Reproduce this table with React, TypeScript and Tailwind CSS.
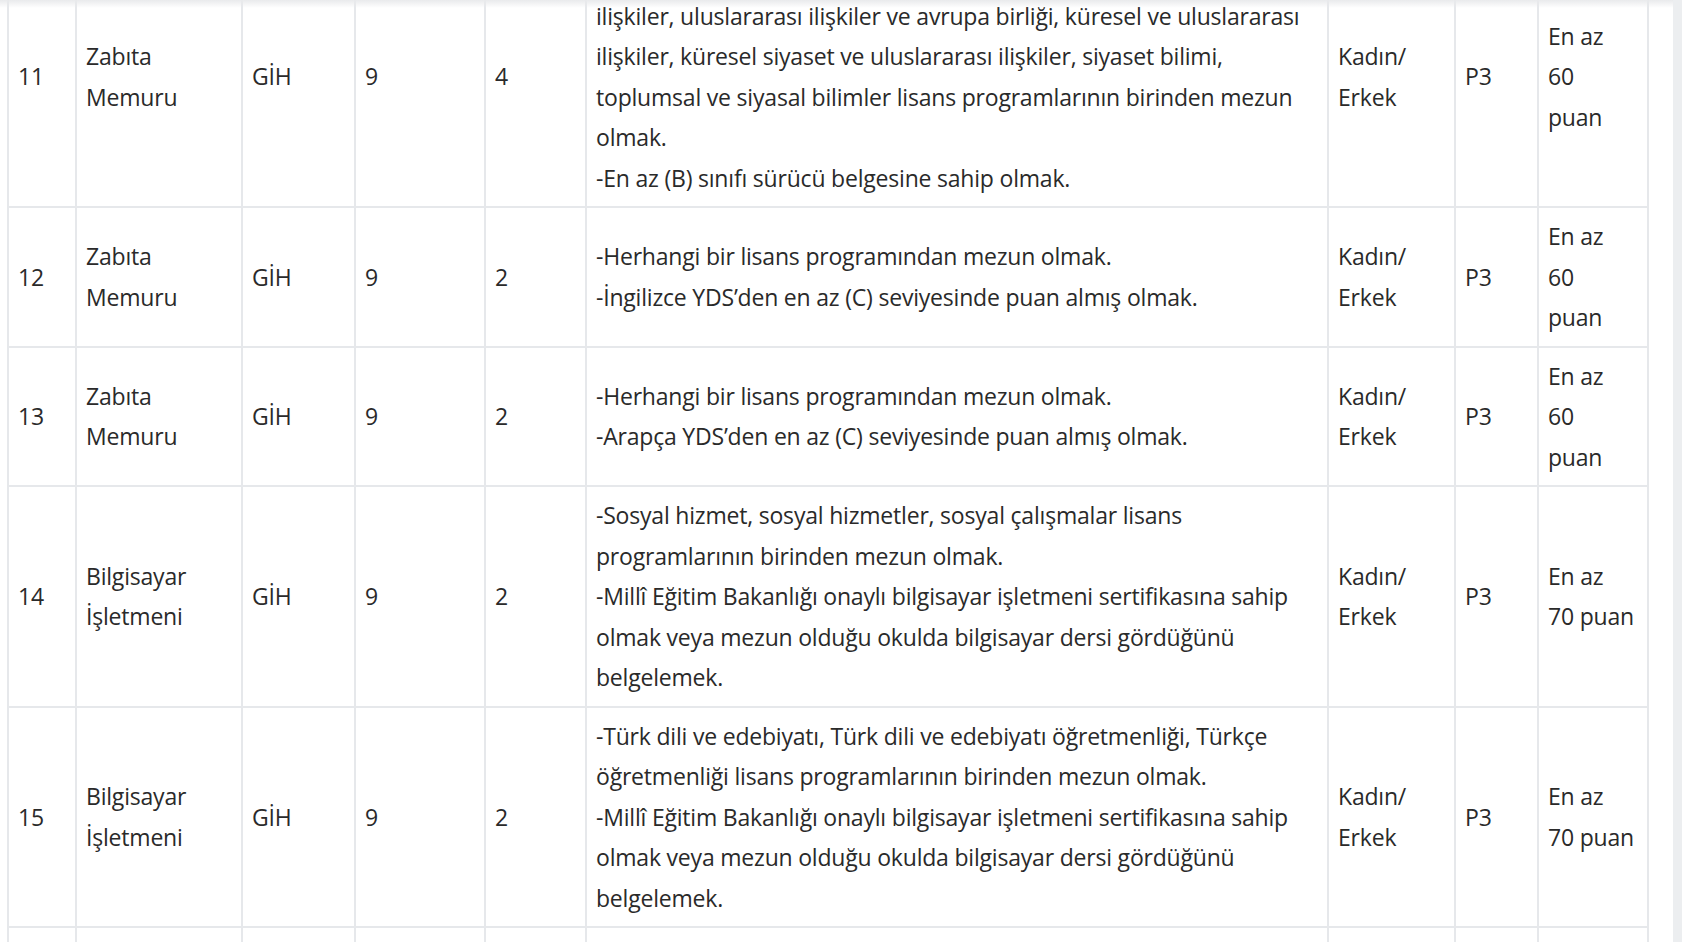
import React from 'react'

type Row = {
  no: string
  kadro: string[]
  sinif: string
  derece: string
  adet: string
  nitelik: string[]
  puan: string[]
}

const rows: Row[] = [
  {
    no: '11',
    kadro: ['Zabıta', 'Memuru'],
    sinif: 'GİH',
    derece: '9',
    adet: '4',
    nitelik: [
      '-Siyaset bilimi ve uluslararası ilişkiler, uluslararası',
      'ilişkiler, uluslararası ilişkiler ve avrupa birliği, küresel ve uluslararası',
      'ilişkiler, küresel siyaset ve uluslararası ilişkiler, siyaset bilimi,',
      'toplumsal ve siyasal bilimler lisans programlarının birinden mezun',
      'olmak.',
      '-En az (B) sınıfı sürücü belgesine sahip olmak.',
    ],
    puan: ['En az', '60', 'puan'],
  },
  {
    no: '12',
    kadro: ['Zabıta', 'Memuru'],
    sinif: 'GİH',
    derece: '9',
    adet: '2',
    nitelik: [
      '-Herhangi bir lisans programından mezun olmak.',
      '-İngilizce YDS’den en az (C) seviyesinde puan almış olmak.',
    ],
    puan: ['En az', '60', 'puan'],
  },
  {
    no: '13',
    kadro: ['Zabıta', 'Memuru'],
    sinif: 'GİH',
    derece: '9',
    adet: '2',
    nitelik: [
      '-Herhangi bir lisans programından mezun olmak.',
      '-Arapça YDS’den en az (C) seviyesinde puan almış olmak.',
    ],
    puan: ['En az', '60', 'puan'],
  },
  {
    no: '14',
    kadro: ['Bilgisayar', 'İşletmeni'],
    sinif: 'GİH',
    derece: '9',
    adet: '2',
    nitelik: [
      '-Sosyal hizmet, sosyal hizmetler, sosyal çalışmalar lisans',
      'programlarının birinden mezun olmak.',
      '-Millî Eğitim Bakanlığı onaylı bilgisayar işletmeni sertifikasına sahip',
      'olmak veya mezun olduğu okulda bilgisayar dersi gördüğünü',
      'belgelemek.',
    ],
    puan: ['En az', '70 puan'],
  },
  {
    no: '15',
    kadro: ['Bilgisayar', 'İşletmeni'],
    sinif: 'GİH',
    derece: '9',
    adet: '2',
    nitelik: [
      '-Türk dili ve edebiyatı, Türk dili ve edebiyatı öğretmenliği, Türkçe',
      'öğretmenliği lisans programlarının birinden mezun olmak.',
      '-Millî Eğitim Bakanlığı onaylı bilgisayar işletmeni sertifikasına sahip',
      'olmak veya mezun olduğu okulda bilgisayar dersi gördüğünü',
      'belgelemek.',
    ],
    puan: ['En az', '70 puan'],
  },
]

const cell = 'border-2 border-[#e6e8eb] px-[9px] py-[8px] align-middle text-left whitespace-nowrap'

function Lines({ items }: { items: string[] }) {
  return (
    <>
      {items.map((t, i) => (
        <div key={i}>{t}</div>
      ))}
    </>
  )
}

export default function App() {
  return (
    <div className="flex h-[942px] w-full overflow-hidden bg-white">
      <div className="relative flex-1 overflow-hidden">
        {/* faint header shadow */}
        <div className="pointer-events-none absolute inset-x-0 top-0 h-[8px] bg-gradient-to-b from-[#e9eaec] to-transparent" />
        <table
          className="ml-[7px] mt-[-55px] w-[1640px] table-fixed border-collapse text-[23px] leading-[40.5px] tracking-[-0.2px] text-[#2a2a2a]"
          style={{ fontFamily: '"Open Sans", "Noto Sans", sans-serif' }}
        >
          <colgroup>
            <col className="w-[68px]" />
            <col className="w-[166px]" />
            <col className="w-[113px]" />
            <col className="w-[130px]" />
            <col className="w-[101px]" />
            <col className="w-[742px]" />
            <col className="w-[127px]" />
            <col className="w-[83px]" />
            <col className="w-[110px]" />
          </colgroup>
          <tbody>
            {rows.map((r) => (
              <tr key={r.no}>
                <td className={cell}>{r.no}</td>
                <td className={cell}>
                  <Lines items={r.kadro} />
                </td>
                <td className={cell}>{r.sinif}</td>
                <td className={cell}>{r.derece}</td>
                <td className={cell}>{r.adet}</td>
                <td className={cell}>
                  <Lines items={r.nitelik} />
                </td>
                <td className={cell}>
                  <Lines items={['Kadın/', 'Erkek']} />
                </td>
                <td className={cell}>P3</td>
                <td className={cell}>
                  <Lines items={r.puan} />
                </td>
              </tr>
            ))}
            <tr>
              <td className={cell}>16</td>
              <td className={cell}>
                <Lines items={['Bilgisayar', 'İşletmeni']} />
              </td>
              <td className={cell}>GİH</td>
              <td className={cell}>9</td>
              <td className={cell}>1</td>
              <td className={cell}>
                <Lines items={['-Herhangi bir lisans programından mezun olmak.']} />
              </td>
              <td className={cell}>
                <Lines items={['Kadın/', 'Erkek']} />
              </td>
              <td className={cell}>P3</td>
              <td className={cell}>
                <Lines items={['En az', '70 puan']} />
              </td>
            </tr>
          </tbody>
        </table>
      </div>
      <div className="w-[9px] shrink-0 bg-[#eceef0]" />
    </div>
  )
}
